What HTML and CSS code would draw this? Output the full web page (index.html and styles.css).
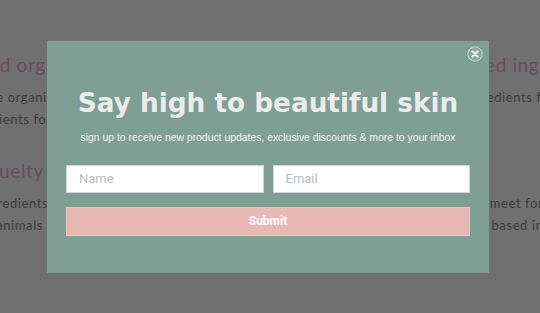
FILE: index.html
```html
<!DOCTYPE html>
<html lang="en">
<head>
  <meta charset="UTF-8" />
  <meta name="viewport" content="width=device-width, initial-scale=1" />
  <title>Say high to beautiful skin</title>
  <link rel="stylesheet" href="styles.css">
</head>
<body>
  <!-- Page content behind the popup -->
  <div class="page">
    <div class="col">
      <h3>Certified organic</h3>
      <p>We use the organic oils</p>
      <p>and ingredients for a</p>
      <h3>Truly cruelty free</h3>
      <p>All our ingredients</p>
      <p>tested on animals no</p>
    </div>
    <div class="col">
      <h3>Sourced ingredients</h3>
      <p>Our ingredients free</p>
      <p>&nbsp;</p>
      <h3>&nbsp;</h3>
      <p>made to meet forest</p>
      <p>with soy based inks</p>
    </div>
  </div>

  <!-- Newsletter popup -->
  <div class="overlay">
    <div class="modal">
      <button class="close" aria-label="Close">
        <svg viewBox="0 0 16 16" width="16" height="16">
          <circle cx="8" cy="8" r="7.2" fill="rgba(255,255,255,0.12)" stroke="rgba(255,255,255,0.55)" stroke-width="1"/>
          <path d="M5.4 5.4 L10.6 10.6 M10.6 5.4 L5.4 10.6" stroke="#fff" stroke-width="1.8" stroke-linecap="round"/>
        </svg>
      </button>
      <h1>Say high to beautiful skin</h1>
      <p class="sub">sign up to receive new product updates, exclusive discounts &amp; more to your inbox</p>
      <form class="signup">
        <div class="fields">
          <input type="text" placeholder="Name">
          <input type="email" placeholder="Email">
        </div>
        <button type="button" class="submit">Submit</button>
      </form>
    </div>
  </div>
</body>
</html>
```

FILE: styles.css
```css
html, body { height: 100%; margin: 0; padding: 0; }
body {
  font-family: Lato, "Noto Sans", sans-serif;
  background: #fff;
  overflow: hidden;
}
/* Page behind the popup */
.page {
  display: grid;
  grid-template-columns: 420px 420px;
  column-gap: 82px;
  margin-left: -67px;
  padding-top: 52px;
}
.col { overflow: hidden; }
.col h3 {
  font-weight: 400;
  font-size: 19px;
  letter-spacing: 0.6px;
  color: #e2b0d8;
  margin: 0 0 8px;
  line-height: 26px;
  white-space: nowrap;
}
.col p {
  margin: 0;
  font-size: 13px;
  letter-spacing: 0.6px;
  line-height: 22px;
  color: #888;
  white-space: nowrap;
}
.col p + h3 { margin-top: 28px; }
/* Popup */
.overlay {
  position: fixed;
  inset: 0;
  background: rgba(0, 0, 0, 0.56);
  display: flex;
  align-items: center;
  justify-content: center;
  padding-right: 4px;
}
.modal {
  position: relative;
  width: 442px;
  height: 232px;
  box-sizing: border-box;
  padding: 44px 19px 0;
  background: #7f9e94;
  text-align: center;
}
.close {
  position: absolute;
  top: 5px;
  right: 6px;
  width: 16px;
  height: 16px;
  padding: 0;
  border: 0;
  background: none;
  cursor: pointer;
}
.close svg { display: block; }
.modal h1 {
  margin: 0;
  font-family: "DejaVu Sans", Verdana, sans-serif;
  font-weight: 700;
  font-size: 26.3px;
  line-height: 36px;
  color: #ececec;
}
.modal .sub {
  margin: 10px 0 0;
  font-family: "Liberation Sans", Arial, sans-serif;
  font-size: 10.4px;
  line-height: 14px;
  color: #f4f4f4;
}
.signup { margin-top: 20px; }
.fields { display: flex; gap: 9px; }
.fields input {
  flex: 1;
  min-width: 0;
  height: 28px;
  box-sizing: border-box;
  border: 1px solid #d3d6dc;
  padding: 0 12px;
  font-family: Roboto, sans-serif;
  font-size: 13px;
  background: #fff;
  outline: none;
}
.fields input::placeholder { color: #b7bcc6; }
.submit {
  display: block;
  width: 100%;
  height: 29px;
  margin-top: 14px;
  border: 1px solid #ecc4bf;
  background: #e8b9b4;
  color: #fff;
  font-family: Roboto, sans-serif;
  font-weight: 700;
  font-size: 12px;
  cursor: pointer;
}
```
